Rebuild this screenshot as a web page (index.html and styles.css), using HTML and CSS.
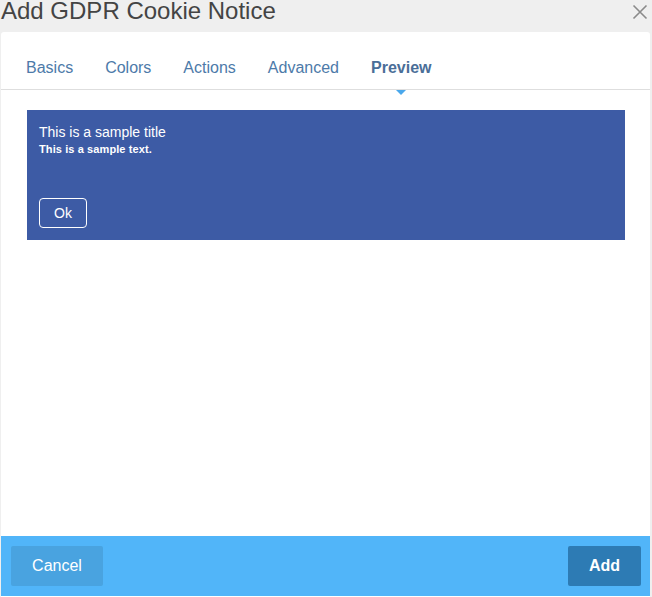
FILE: index.html
```html
<!DOCTYPE html>
<html>
<head>
<meta charset="utf-8">
<link rel="stylesheet" href="styles.css">
</head>
<body>
<div class="dialog">
  <header class="dialog-head">
    <h1 class="dialog-title">Add GDPR Cookie Notice</h1>
    <button class="close" aria-label="Close">
      <svg width="16" height="16" viewBox="0 0 16 16"><path d="M1.5 1.5 L14.5 14.5 M14.5 1.5 L1.5 14.5" stroke="#8a8a8a" stroke-width="1.6" fill="none"/></svg>
    </button>
  </header>
  <div class="card">
    <nav class="tabs">
      <span class="tab">Basics</span>
      <span class="tab">Colors</span>
      <span class="tab">Actions</span>
      <span class="tab">Advanced</span>
      <span class="tab active">Preview</span>
    </nav>
    <main class="content">
      <div class="notice">
        <div class="notice-title">This is a sample title</div>
        <div class="notice-text">This is a sample text.</div>
        <button class="notice-btn">Ok</button>
      </div>
    </main>
    <footer class="footer">
      <button class="btn btn-cancel">Cancel</button>
      <button class="btn btn-add">Add</button>
    </footer>
  </div>
</div>
</body>
</html>
```

FILE: styles.css
```css
* { box-sizing: border-box; }
html, body { margin: 0; padding: 0; }
body {
  width: 652px;
  height: 597px;
  overflow: hidden;
  background: #efefef;
  font-family: "Liberation Sans", Arial, sans-serif;
}
.dialog {
  display: flex;
  flex-direction: column;
  height: 597px;
}
.dialog-head {
  display: flex;
  justify-content: space-between;
  align-items: flex-start;
  height: 32px;
}
.dialog-title {
  margin: 0 0 0 1px;
  font-size: 24px;
  line-height: 22px;
  font-weight: normal;
  color: #444;
}
.close {
  border: 0;
  background: none;
  padding: 0;
  margin: 4px 4px 0 0;
  width: 16px;
  height: 16px;
  display: block;
}
.close svg { display: block; }
.card {
  margin-left: 1px;
  width: 649px;
  height: 565px;
  background: #fff;
  border-radius: 3px 3px 0 0;
  display: flex;
  flex-direction: column;
}
.tabs {
  display: flex;
  padding: 26px 0 0 9px;
  border-bottom: 1px solid #dedede;
}
.tab {
  position: relative;
  padding: 0 16px 11px;
  font-size: 16px;
  line-height: 20px;
  color: #4d7aa9;
}
.tab.active {
  font-weight: bold;
  color: #4a6e98;
}
.tab.active::after {
  content: "";
  position: absolute;
  left: 50%;
  margin-left: -5px;
  bottom: -6px;
  border-left: 5px solid transparent;
  border-right: 5px solid transparent;
  border-top: 5px solid #4aa8ec;
}
.content {
  flex: 1;
  padding: 20px 25px 0 26px;
}
.notice {
  background: #3d5ba5;
  height: 130px;
  padding: 13px 12px 12px;
  display: flex;
  flex-direction: column;
  align-items: flex-start;
  color: #fff;
}
.notice-title {
  font-size: 14px;
  line-height: 18px;
}
.notice-text {
  font-size: 11px;
  line-height: 17px;
  font-weight: bold;
  letter-spacing: 0.1px;
}
.notice-btn {
  margin-top: auto;
  width: 48px;
  height: 30px;
  border: 1px solid #fff;
  border-radius: 4px;
  background: transparent;
  color: #fff;
  font-family: inherit;
  font-size: 14px;
  padding: 0;
}
.footer {
  height: 60px;
  background: #51b5f9;
  display: flex;
  justify-content: space-between;
  align-items: center;
  padding: 0 9px 0 10px;
  margin-bottom: 1px;
}
.btn {
  height: 40px;
  border: 0;
  border-radius: 2px;
  color: #fff;
  font-family: inherit;
  font-size: 16px;
  padding: 0;
}
.btn-cancel {
  width: 92px;
  background: #49a3e0;
}
.btn-add {
  width: 73px;
  background: #2d7bb4;
  font-weight: bold;
}
```
